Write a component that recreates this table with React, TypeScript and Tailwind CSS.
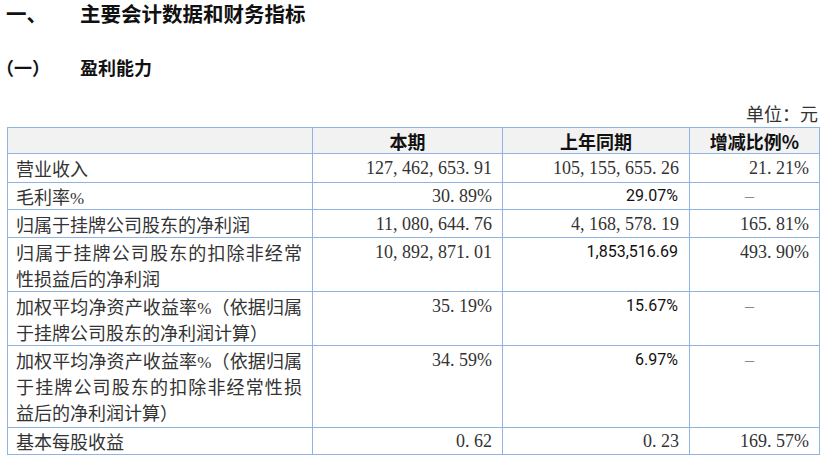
import React from 'react'

type Row = {
  label: string
  current: string
  previous: string
  change: string
  height: string
  multi?: boolean
}

const rows: Row[] = [
  { label: '营业收入', current: '127,462,653.91', previous: '105,155,655.26', change: '21.21%', height: 'h-[29px]' },
  { label: '毛利率%', current: '30.89%', previous: '29.07%', change: '-', height: 'h-[27px]' },
  { label: '归属于挂牌公司股东的净利润', current: '11,080,644.76', previous: '4,168,578.19', change: '165.81%', height: 'h-[28px]' },
  { label: '归属于挂牌公司股东的扣除非经常性损益后的净利润', current: '10,892,871.01', previous: '1,853,516.69', change: '493.90%', height: 'h-[54px]', multi: true },
  { label: '加权平均净资产收益率%（依据归属于挂牌公司股东的净利润计算）', current: '35.19%', previous: '15.67%', change: '-', height: 'h-[54px]', multi: true },
  { label: '加权平均净资产收益率%（依据归属于挂牌公司股东的扣除非经常性损益后的净利润计算）', current: '34.59%', previous: '6.97%', change: '-', height: 'h-[82px]', multi: true },
  { label: '基本每股收益', current: '0.62', previous: '0.23', change: '169.57%', height: 'h-[27px]' },
]

// these previous-year figures are set in a different font in the source doc
const sansPrevious = ['29.07%', '1,853,516.69', '15.67%', '6.97%']

const Num: React.FC<{ value: string }> = ({ value }) => {
  if (value === '-') {
    return <span className="inline-block w-full text-center text-[#8a8a8a]">–</span>
  }
  return (
    <>
      {value.split('').map((ch, i) =>
        ch === ',' || ch === '.' ? (
          <span key={i} className="inline-block w-[9px] text-left">
            {ch}
          </span>
        ) : (
          <span key={i}>{ch}</span>
        )
      )}
    </>
  )
}

// the % sign is narrow in the original font, keep it from pushing CJK to the next line
const Label: React.FC<{ text: string }> = ({ text }) => {
  const parts = text.split('%')
  return (
    <>
      {parts.map((p, i) => (
        <React.Fragment key={i}>
          {p}
          {i < parts.length - 1 && (
            <span className="font-['Liberation_Serif',serif] text-[17px] leading-none">%</span>
          )}
        </React.Fragment>
      ))}
    </>
  )
}

export default function App() {
  const cell = 'border border-[#8eb4e3] leading-[26px]'
  return (
    <div
      lang="zh-CN"
      className="w-[831px] h-[457px] overflow-hidden bg-white text-[#333] font-['Noto_Sans_CJK_SC',sans-serif]"
    >
      <h1 className="flex pl-[6px] leading-[26px] text-[20.5px] font-bold text-[#111]">
        <span className="w-[74px]">一、</span>
        <span>主要会计数据和财务指标</span>
      </h1>

      <h2 className="flex -ml-[4px] mt-[28px] leading-[27px] text-[18px] font-bold text-[#111]">
        <span className="w-[84px]">（一）</span>
        <span>盈利能力</span>
      </h2>

      <div className="mt-[18px] leading-[28px] pr-[13px] text-right text-[18px] text-[#333]">
        单位：元
      </div>

      <table className="ml-[7px] w-[812px] table-fixed border-collapse text-[18px]">
        <colgroup>
          <col className="w-[305px]" />
          <col className="w-[190px]" />
          <col className="w-[187px]" />
          <col className="w-[130px]" />
        </colgroup>
        <thead>
          <tr className="h-[26px] bg-[#f2f2f2]">
            <th className="border border-[#8eb4e3] p-0"></th>
            <th className="border border-[#8eb4e3] p-0 text-center font-bold leading-[24px] text-[#111]">本期</th>
            <th className="border border-[#8eb4e3] p-0 text-center font-bold leading-[24px] text-[#111]">上年同期</th>
            <th className="border border-[#8eb4e3] p-0 text-center font-bold leading-[24px] text-[#111]">增减比例%</th>
          </tr>
        </thead>
        <tbody>
          {rows.map((row) => {
            const align = row.multi ? 'align-top pt-[1px] pb-0' : 'align-middle py-0'
            const isSans = sansPrevious.includes(row.previous)
            return (
              <tr key={row.label} className={row.height}>
                <td className={`${cell} pl-[8px] pr-[10px] text-justify ${align}`}>
                  <Label text={row.label} />
                </td>
                <td className={`${cell} pr-[10px] text-right font-['Liberation_Serif',serif] ${align}`}>
                  <Num value={row.current} />
                </td>
                {isSans ? (
                  <td className={`${cell} pr-[11px] text-right text-[16px] text-[#111] font-['Roboto',sans-serif] ${align}`}>
                    {row.previous}
                  </td>
                ) : (
                  <td className={`${cell} pr-[10px] text-right font-['Liberation_Serif',serif] ${align}`}>
                    <Num value={row.previous} />
                  </td>
                )}
                <td className={`${cell} pr-[10px] text-right font-['Liberation_Serif',serif] ${align}`}>
                  <Num value={row.change} />
                </td>
              </tr>
            )
          })}
        </tbody>
      </table>
    </div>
  )
}
